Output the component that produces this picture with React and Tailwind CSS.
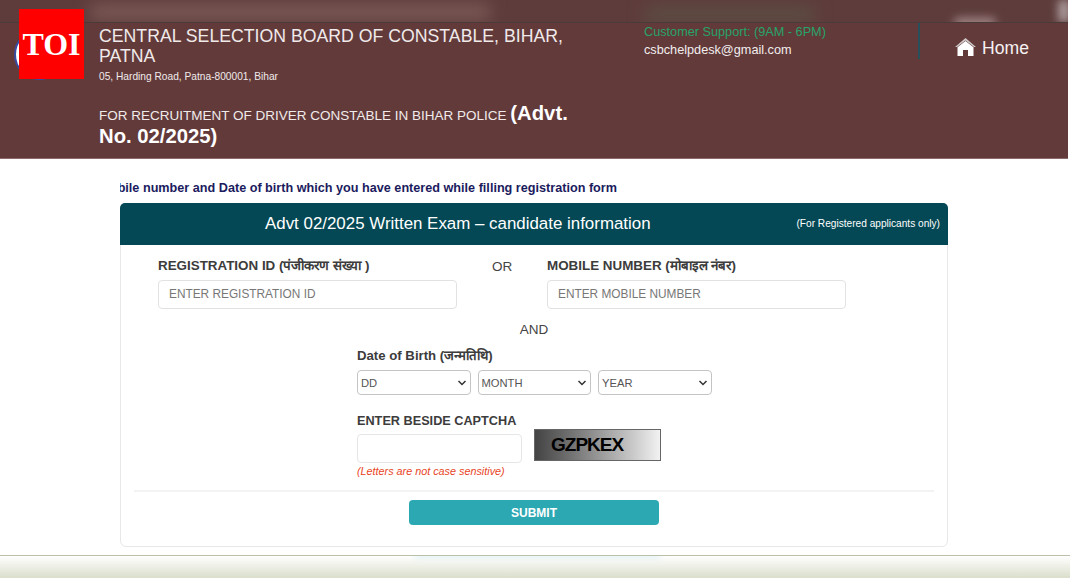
import React from 'react';

const Label = ({ children, className = 'text-[13.4px]' }) => (
    <label className={`block whitespace-nowrap leading-[16px] font-bold text-[#3c3c3c] ${className}`}>{children}</label>
);

const DateSelect = ({ label }) => (
    <div className="relative h-[25px] w-[113.5px] rounded-[4px] border border-[#c4c4c4] bg-white">
        <span className="absolute left-[3px] top-[4px] text-[11.2px] leading-[16px] text-[#555]">{label}</span>
        <svg className="absolute right-[3px] top-[8px]" width="10" height="8" viewBox="0 0 10 8" fill="none">
            <path d="M1.5 2 L5 5.5 L8.5 2" stroke="#333" strokeWidth="1.5" />
        </svg>
    </div>
);

const App = () => {
    return (
        <div className="relative h-[578px] w-[1070px] overflow-hidden bg-white font-['Liberation_Sans',sans-serif]">
            {/* header */}
            <div className="relative h-[159px] w-[1068px] overflow-hidden border-b border-[#8c6a6a] bg-[#623a3a]">
                <div className="relative h-[23px] overflow-hidden border-b border-[#4a3a3a] bg-[#5e3c3c]">
                    <div className="absolute left-[90px] top-[5px] h-[14px] w-[400px] bg-[#7e5d59] blur-[8px]" />
                    <div className="absolute left-[645px] top-[6px] h-[18px] w-[170px] bg-[#5c4c42] blur-[8px]" />
                    <div className="absolute left-[955px] top-[18px] h-[10px] w-[40px] bg-[#a58a8a] blur-[5px]" />
                    <div className="absolute left-[1058px] top-0 h-[22px] w-[12px] bg-[#a99] blur-[4px]" />
                </div>
                <div className="flex">
                    <div className="w-[99px] shrink-0" />
                    <div className="w-[490px] shrink-0 pt-[3px] text-[#f0eaea]">
                        <h1 className="text-[17.7px] leading-[20px]">CENTRAL SELECTION BOARD OF CONSTABLE, BIHAR, PATNA</h1>
                        <p className="mt-[4px] text-[10.2px] leading-[13px]">05, Harding Road, Patna-800001, Bihar</p>
                        <p className="mt-[20px] text-[13.5px] leading-[20px]">
                            FOR RECRUITMENT OF DRIVER CONSTABLE IN BIHAR POLICE{' '}
                            <b className="text-[20.3px] text-white">(Advt. No. 02/2025)</b>
                        </p>
                    </div>
                    <div className="ml-[55px] w-[274px] shrink-0">
                        <p className="text-[12.7px] leading-[18px] text-[#27a468]">Customer Support: (9AM - 6PM)</p>
                        <p className="text-[12.7px] leading-[18px] text-[#f2eeee]">csbchelpdesk@gmail.com</p>
                    </div>
                    <div className="flex h-[36px] flex-1 items-start border-l-2 border-[#27505a] pl-[34px] pt-[15px]">
                        <svg width="23" height="20" viewBox="0 0 23 20" className="mt-[-1px]">
                            <path d="M11.5 1 L22 10 L20 10 L11.5 3.4 L3 10 L1 10 Z" fill="#cfc8c8" />
                            <path d="M11.5 4 L19.5 10.3 V19 H14 V13 H9 V19 H3.5 V10.3 Z" fill="#fff" />
                        </svg>
                        <span className="ml-[5px] text-[17.6px] leading-[20px] text-[#f6f2f2]">Home</span>
                    </div>
                </div>
                {/* seal sitting behind the TOI badge */}
                <div className="absolute left-[14px] top-[29px] h-[51px] w-[51px] rounded-full border-2 border-[#3a4aa0] bg-white" />
            </div>

            <div className="absolute left-[19px] top-[9px] flex h-[70px] w-[65px] items-center justify-center bg-[#ff0000]">
                <span className="font-['Liberation_Serif',serif] text-[32px] font-bold leading-none text-white">TOI</span>
            </div>

            {/* notice + card */}
            <div className="ml-[120px] w-[828px]">
                <div className="mt-[21px] flex w-[497px] justify-end overflow-hidden whitespace-nowrap text-[12.65px] leading-[16px] font-bold text-[#1b1b5e]">
                    Mobile number and Date of birth which you have entered while filling registration form
                </div>
                <div className="mt-[7px] h-[344px] rounded-[6px] border border-[#e8e8e8]">
                    <div className="relative -m-px flex h-[42px] items-center rounded-t-[5px] bg-[#034854] pl-[145px] text-white">
                        <span className="text-[16.9px]">Advt 02/2025 Written Exam – candidate information</span>
                        <span className="absolute right-[8px] top-[14px] text-[10.15px] leading-[14px]">(For Registered applicants only)</span>
                    </div>

                    <div className="mt-[14px] flex pl-[37px]">
                        <div className="w-[299px]">
                            <Label>REGISTRATION ID (पंजीकरण संख्या )</Label>
                            <div className="mt-[6px] h-[29px] rounded-[4px] border border-[#e2e2e2] pl-[10px] text-[11.85px] leading-[27px] text-[#777]">
                                ENTER REGISTRATION ID
                            </div>
                        </div>
                        <div className="w-[90px] pt-[1px] text-center text-[13.5px] leading-[16px] text-[#444]">OR</div>
                        <div className="w-[299px]">
                            <Label>MOBILE NUMBER (मोबाइल नंबर)</Label>
                            <div className="mt-[6px] h-[29px] rounded-[4px] border border-[#e2e2e2] pl-[10px] text-[11.85px] leading-[27px] text-[#777]">
                                ENTER MOBILE NUMBER
                            </div>
                        </div>
                    </div>

                    <div className="mt-[13px] text-center text-[13.5px] leading-[16px] text-[#444]">AND</div>

                    <div className="ml-[236px] mt-[10px]">
                        <Label className="text-[13.2px]">Date of Birth (जन्मतिथि)</Label>
                        <div className="mt-[6px] flex gap-[7px]">
                            <DateSelect label="DD" />
                            <DateSelect label="MONTH" />
                            <DateSelect label="YEAR" />
                        </div>
                        <div className="mt-[18px] flex">
                            <div className="w-[165px]">
                                <Label className="text-[12.7px]">ENTER BESIDE CAPTCHA</Label>
                                <div className="mt-[5px] h-[29px] rounded-[4px] border border-[#e6e6e6]" />
                                <p className="mt-[1px] text-[10.8px] leading-[14px] italic text-[#e8451e]">(Letters are not case sensitive)</p>
                            </div>
                            <div className="ml-[12px] mt-[16px] flex h-[32px] w-[127px] items-center border border-[#666] bg-gradient-to-r from-[#444] to-[#f2f2f2] pl-[16px]">
                                <span className="text-[19px] font-bold tracking-[-1px] text-black">GZPKEX</span>
                            </div>
                        </div>
                    </div>

                    <div className="mx-[13px] mt-[12px] h-[2px] bg-[#f3f3f3]" />
                    <div className="mt-[8px] flex justify-center">
                        <button className="h-[25px] w-[250px] rounded-[4px] bg-[#2ca8b3] text-[12px] font-bold text-white">SUBMIT</button>
                    </div>
                </div>
            </div>

            {/* bottom strip */}
            <div className="absolute bottom-0 left-0 right-0 h-[23px] overflow-hidden border-t border-[#b9bfa8] bg-gradient-to-b from-white to-[#dadecb]">
                <div className="absolute left-[415px] top-[-4px] h-[6px] w-[245px] bg-[#dff0f2] blur-[3px]" />
            </div>
        </div>
    );
};

export default App;
